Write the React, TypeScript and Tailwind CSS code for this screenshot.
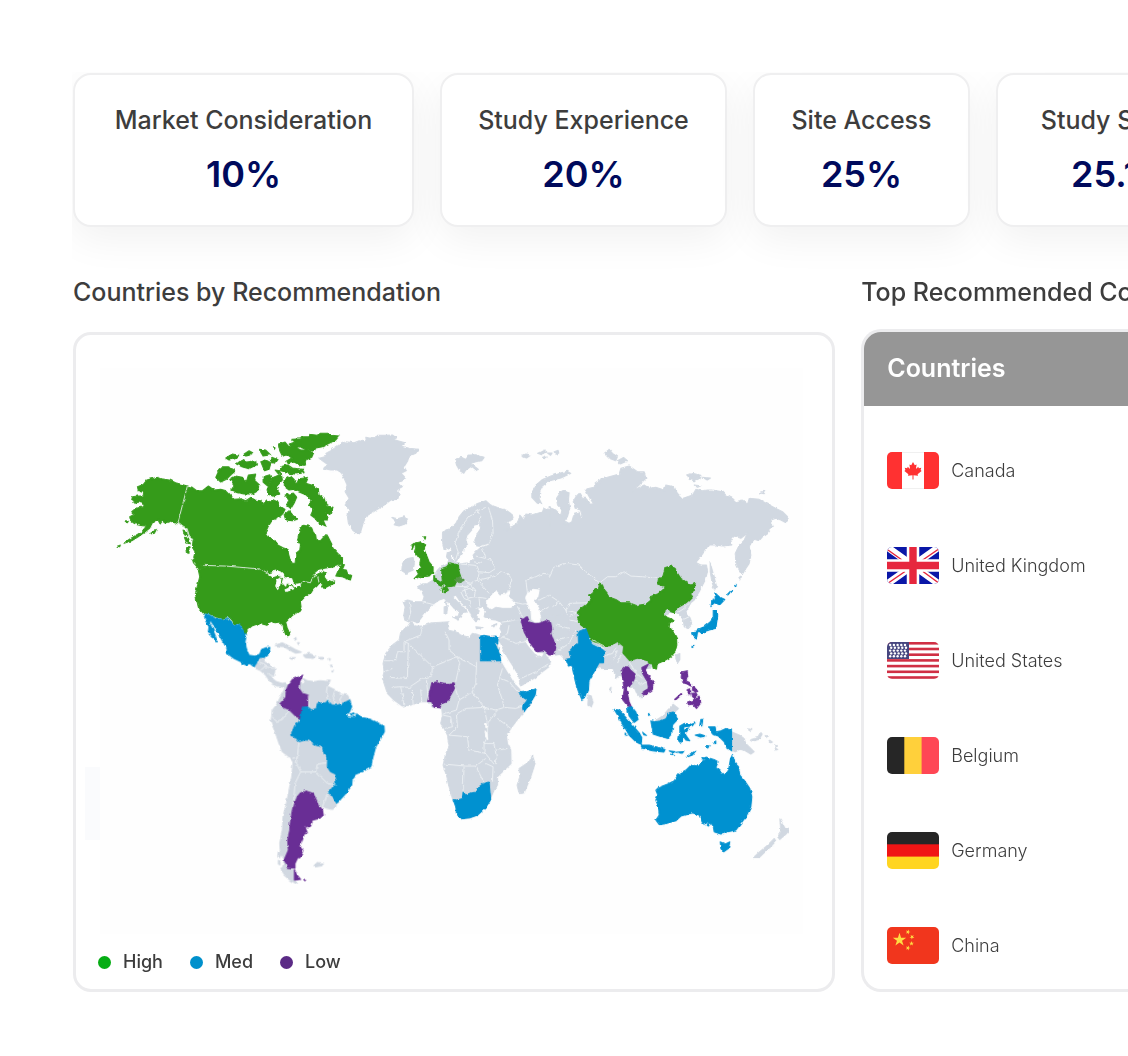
import { clsx } from 'clsx'

const weights = [
  { name: 'Market Consideration', value: '10%', width: 'w-[341px]' },
  { name: 'Study Experience', value: '20%', width: 'w-[287px]' },
  { name: 'Site Access', value: '25%', width: 'w-[217px]' },
  { name: 'Study Startup', value: '25.1%', width: 'w-[254px]' },
]

const legend = [
  { name: 'High', color: 'bg-[#06ad14]' },
  { name: 'Med', color: 'bg-[#0090cc]' },
  { name: 'Low', color: 'bg-[#5b2b86]' },
]

const LAND = '#d1d8e1'
const HIGH = '#359b1a'
const MED = '#0091d0'
const LOW = '#692e95'
const SEA = '#fefefe'

type Shape = [fill: string, d: string]

interface Region {
  name: string
  transform: string
  shapes: Shape[]
  borders?: string
}

const regions: Region[] = [
  {
    name: 'eurasia-west',
    transform: 'translate(310 420) scale(.33333)',
    shapes: [
      [LAND, 'M400 340 410 330 425 325 440 310 450 290 465 272 485 262 505 250 530 242 545 255 565 262 590 270 605 280 612 292 605 302 585 306 600 315 605 325 590 330 580 318 590 328 612 318 622 312 628 300 632 285 645 300 650 282 670 285 700 275 705 262 720 270 745 290 780 310 780 690 700 650 575 650 580 640 572 625 580 608 560 600 545 598 525 590 528 575 540 568 528 570 520 560 505 565 510 575 500 585 512 598 500 605 488 590 482 575 470 560 450 540 440 525 430 530 445 545 462 560 474 575 462 578 456 592 448 588 450 578 435 565 420 548 405 535 390 540 375 550 360 565 350 575 335 595 325 608 310 602 298 605 287 600 284 585 288 560 282 545 295 540 320 545 340 545 345 530 340 515 325 500 340 492 355 490 372 480 375 465 385 450 395 440 400 440 415 432 418 420 412 410 415 395 425 392 430 400 425 415 435 425 450 432 465 430 480 428 492 418 492 405 500 395 515 382 540 375 540 370 515 376 500 375 497 360 505 340 515 325 510 312 495 315 488 330 475 345 470 360 475 375 462 385 460 400 450 412 440 425 435 415 430 395 425 380 405 390 400 365Z'],
      [LAND, 'M248 292 265 296 285 290 295 300 288 312 270 318 255 314 262 304ZM438 118 458 112 470 118 480 105 500 104 525 112 518 122 500 125 485 130 508 148 500 152 485 140 470 150 464 160 452 152 442 135ZM638 108 650 102 664 106 652 114ZM685 100 705 90 713 96 698 104ZM700 112l12-4 2 4-10 4ZM715 99l14 0-5 7ZM735 95l12-4 2 8-8 4ZM668 232 668 215 680 195 700 178 725 168 750 160 775 154 785 160 755 174 722 182 702 196 692 215 690 235 698 252 685 250Z'],
      [LAND, 'M280 430 295 415 312 412 316 430 312 450 290 460 278 452ZM430 590 450 588 448 600ZM405 560 415 560 413 582 405 582ZM408 543 414 543 412 556ZM500 620 522 622 502 626ZM548 616 564 610 556 622Z'],
      [LAND, 'M30 115 55 108 50 100 65 92 90 75 110 65 135 68 150 62 172 66 170 52 200 56 205 46 225 46 250 45 262 54 250 58 288 68 275 78 300 85 328 88 320 100 300 108 296 122 285 140 292 152 276 160 286 170 284 180 268 188 280 200 262 210 270 222 266 238 245 240 225 255 205 268 185 280 170 290 162 310 155 335 150 342 132 332 118 310 115 290 120 270 108 255 120 235 108 215 114 195 105 175 98 160 85 150 65 150 40 145 58 135Z'],
      [HIGH, 'M315 370 335 365 350 375 345 388 352 405 360 425 372 440 372 455 360 468 335 470 315 476 328 462 322 450 337 445 332 430 335 415 322 408 316 395 320 382ZM344 350l6 0-2 8ZM306 376l8-6-4 18ZM398 445 412 440 422 428 448 435 450 455 455 470 440 485 437 498 415 500 400 490 398 465ZM374 466l6 4 0 8 22 12 0 12-14-8-14-12ZM393 508 412 500 418 510 405 518Z'],
      ['#569a48', 'M438 480 455 472 466 480 450 488Z'],
    ],
    borders:
      'M440 418 447 395 438 370 448 340 460 315 480 290 505 272 530 262M505 272 515 290 508 310M538 262 550 300 552 340 540 370M455 432 500 436 510 460 505 480 480 490 466 480M500 408 528 415M492 425 520 430M520 385 530 415 545 420 560 445 540 458 510 455M510 480 550 470 575 455 600 465 608 480 595 515M505 480 522 500 540 520M480 490 500 510 495 530 532 535M437 498 470 500 490 490M455 515 480 505 500 512M455 515 465 535 485 545 485 562M465 505 475 535 495 530M400 520 405 510M340 545 378 555M300 545 305 575 298 602M400 495 395 520M610 545 640 552 660 550M625 560 640 590M655 520 650 480 680 470 700 460 750 465M690 540 720 525 750 540M695 575 720 560 750 585M578 606 635 600M580 640 605 630 625 605M600 640 640 660M510 535 512 560 500 565',
  },
  {
    name: 'eurasia-east',
    transform: 'translate(550 430) scale(.33333)',
    shapes: [
      [LAND, 'M0 232 20 240 35 255 38 240 25 225 22 205 35 185 45 180 60 188 58 210 62 235 55 260 40 278 52 284 68 275 75 250 90 246 95 264 101 264 94 240 78 235 72 215 80 200 90 190 100 205 110 205 125 222 133 222 120 200 108 178 140 170 138 158 155 148 180 140 210 132 215 115 240 108 265 125 285 125 290 145 270 165 250 182 285 165 300 175 320 172 345 180 350 165 375 170 385 190 400 205 430 195 440 178 460 182 475 180 490 180 520 185 530 195 550 205 560 215 580 210 595 222 600 205 630 208 655 222 680 235 700 245 715 260 710 278 695 270 680 265 665 270 672 290 660 300 650 315 640 320 630 332 615 328 605 340 600 350 605 375 600 400 590 415 580 432 570 420 560 400 558 370 570 345 585 330 594 310 575 325 555 318 545 330 548 345 520 348 500 345 478 345 465 365 450 385 440 397 455 405 472 405 475 425 468 450 450 485 435 510 425 518 410 545 420 560 428 580 415 595 405 590 402 568 385 548 370 545 340 560 370 610 360 680 330 695 300 715 160 715 50 690 30 670 0 670Z'],
      [LAND, 'M483 398 492 430 502 468 496 480 488 455 483 425ZM165 70 180 58 190 70 205 80 200 92 180 85ZM205 92 223 82 235 92 213 102ZM415 135 430 130 455 136 455 144 435 152 420 148ZM460 142l24 2-10 6ZM435 165l20 2-10 5ZM630 188l18-5-3 8ZM380 675 392 670 392 688 386 698 380 690ZM568 444l6-6-2 12Z'],
      [MED, 'M497 488 510 500 527 508 512 524 495 518 485 530 488 512 498 505ZM492 538 502 540 506 555 502 580 500 595 480 600 465 605 455 602 440 608 445 598 465 590 480 578 492 565ZM430 608 445 605 442 627 435 622ZM450 604l14-3-6 9ZM428 652l10-10-2 8ZM532 492l8-8 2 4-6 7ZM544 484l6-4-2 7ZM556 467l5-4-2 6Z'],
      [HIGH, 'M83 548 95 535 115 520 125 510 118 495 130 490 138 475 147 475 152 458 160 465 165 478 175 490 178 500 200 508 215 518 240 518 262 526 290 522 305 510 302 500 325 492 340 480 348 470 325 462 328 445 340 442 345 425 348 412 365 408 378 415 385 430 395 445 410 455 425 465 438 460 435 480 425 490 430 500 415 515 405 522 390 530 375 548 365 545 358 535 342 548 345 555 355 562 375 570 362 578 360 590 372 605 382 625 383 645 378 665 365 680 345 692 320 703 300 700 285 690 275 685 262 690 245 698 232 695 228 678 218 670 218 652 205 640 195 640 185 648 165 648 150 640 135 635 122 628 115 610 110 595 95 585 85 565 92 555ZM310 705l14-2-2 14-10-2Z'],
    ],
    borders:
      'M152 458 175 440 200 440 225 425 245 438 280 440 325 445M0 440 15 410 50 400 90 405 110 425 130 440 150 458M0 495 30 515 50 540 60 520 115 518M30 515 10 530M50 540 83 548M60 560 80 550M0 560 20 575 55 560M20 575 35 600 10 640M60 600 45 630 25 650M50 540 60 570 90 575M385 548 405 535 420 520M403 568 420 560',
  },
  {
    name: 'north-america',
    transform: 'translate(110 420) scale(.33333)',
    shapes: [
      [HIGH, 'M85 200 103 193 113 180 126 176 148 172 158 176 185 181 200 188 235 198 207 306 198 312 186 303 170 308 160 300 152 310 146 298 130 308 122 324 105 338 85 352 68 362 45 370 60 358 80 346 98 335 112 318 100 317 85 314 74 309 64 300 62 290 75 283 68 275 77 267 90 262 103 262 100 250 88 246 78 250 68 240 70 230 85 228 102 228 104 218 88 212ZM24 379l10-4-2 5ZM122 342 142 328 136 340ZM48 302l10 2-6 6Z'],
      [HIGH, 'M235 198 250 202 263 212 280 212 298 198 315 210 335 208 352 212 362 222 375 238 395 236 410 242 425 232 438 240 455 242 462 254 472 240 485 246 490 238 505 245 512 258 528 268 522 280 512 290 502 296 490 300 478 318 468 340 475 350 492 358 506 375 522 383 537 388 538 400 542 415 550 430 558 430 560 410 560 400 572 390 574 375 565 362 568 345 572 330 580 316 598 318 608 324 612 335 620 345 622 360 634 362 645 350 652 342 658 352 668 372 672 385 686 400 700 412 700 428 690 436 672 441 650 444 628 448 614 460 604 474 622 464 640 455 652 458 645 470 652 480 668 484 680 482 676 490 658 498 645 505 637 500 642 492 630 490 622 500 612 508 606 518 596 522 588 530 580 538 574 545 576 560 572 572 560 580 550 586 540 596 530 606 534 622 542 640 538 650 530 644 524 628 522 615 512 606 498 608 490 604 476 608 474 616 460 612 445 612 428 618 414 630 410 645 402 635 396 620 388 612 378 618 366 600 358 592 340 598 322 594 300 584 285 582 278 574 268 562 264 545 259 520 263 505 267 490 272 470 268 450 283 446 278 436 262 428 254 412 258 395 250 382 252 360 240 345 234 325 222 318 207 306Z'],
      [HIGH, 'M700 430 688 450 680 468 700 470 714 476 724 480 728 466 716 462 712 450 700 448 706 434ZM250 417 265 424 283 445 271 448 253 428ZM222 330l10 4 4 14-10-4ZM226 352l12 2 6 18-12-4ZM230 380l10 0 0 20-8-2Z'],
      [HIGH, 'M540 72 558 66 548 58 575 56 580 50 600 50 602 43 625 46 630 40 660 40 668 46 690 48 680 60 660 70 640 80 620 84 616 92 590 88 570 80 555 84ZM508 72 528 66 538 78 560 82 575 90 600 90 614 98 608 112 590 120 585 136 570 134 555 126 535 132 530 124 548 114 535 104 520 108 512 92ZM515 140 535 134 550 144 582 148 585 158 556 162 528 158 514 150ZM320 172 330 150 342 140 358 140 380 152 368 162 352 178 335 186ZM362 178 380 168 400 172 412 185 418 165 440 162 436 180 452 195 450 210 430 222 405 222 385 218 365 210 375 198Z'],
      [HIGH, 'M350 114 370 102 390 106 378 116 360 120ZM382 132 398 120 412 126 440 122 442 135 420 146 398 140ZM405 102 420 92 431 98 413 108ZM450 88 470 90 484 104 462 108ZM455 125 470 120 486 128 480 148 466 152ZM488 112 504 118 496 130 486 124ZM462 170 482 164 488 178 476 198 462 186ZM490 80l8 0-2 8ZM492 172 517 162 520 180 502 200 512 222 496 230 476 222 474 208ZM498 150l16 2-6 10Z'],
      [HIGH, 'M525 180 545 168 555 178 562 192 570 176 598 172 590 190 610 196 628 208 630 225 650 240 655 258 672 262 662 284 650 276 655 300 642 300 650 318 628 308 618 295 605 285 614 265 598 258 606 240 590 224 570 216 555 208 540 210 526 200ZM528 225 553 219 563 231 555 250 545 266 530 252 540 242ZM525 284 540 272 552 286 565 298 550 302 530 300Z'],
      [SEA, 'M478 462 490 458 498 450 520 458 526 472 505 466 490 470ZM505 478 516 474 512 495 506 508 500 498ZM524 472 548 476 553 492 540 494 534 482 530 498 520 488ZM528 509 550 500 554 506 530 514ZM552 494 572 490 574 496 556 500Z'],
    ],
    borders:
      'M235 198 207 306 222 318 234 325 240 345 252 360M283 436 350 438 420 444 455 447 478 460M572 494 582 484 604 488 612 470 625 466 630 488M285 582 300 584 322 594 340 598 358 592 366 600 378 618 388 612 396 620 402 635 410 645',
  },
  {
    name: 'latin-america',
    transform: 'translate(190 610) scale(.33333)',
    shapes: [
      [LAND, 'M195 168 205 155 210 145 228 142 225 155 240 162 258 175 255 195 250 205 262 215 280 220 290 218 295 230 285 232 265 228 250 222 240 210 230 195 215 182 200 175ZM258 106 280 98 300 108 318 118 337 126 320 129 305 122 285 110 270 108ZM343 136 360 130 380 138 372 145 350 143ZM303 143l14 0-4 5ZM390 142l12 0 0 5-12 0ZM315 85l5-3 2 6ZM325 98l6 0-2 6ZM420 145l4 2-2 4ZM424 165l5 0-2 6ZM428 180l5 0-3 6ZM414 210l10 0-4 8Z'],
      [LAND, 'M290 230 305 215 325 200 340 198 332 215 345 225 342 205 355 212 375 215 395 212 418 215 415 228 435 238 455 252 475 255 485 272 480 400 455 560 443 580 440 590 430 598 412 594 400 588 385 600 370 560 325 600 300 660 296 690 298 730 290 750 275 735 272 700 280 660 282 620 292 580 300 540 308 500 312 455 300 440 280 425 270 400 258 365 246 335 250 300 262 285ZM285 750 292 770 305 775 315 780 316 808 325 822 305 812 285 795 275 775 282 770ZM268 725l6 4-2 14-6-6ZM268 750l5 2 0 12-5-2ZM375 767 385 757 403 759 398 767 378 770Z'],
      [MED, 'M45 12 60 14 78 25 100 28 118 24 128 38 138 48 150 42 162 60 172 75 168 95 172 115 180 135 198 138 212 132 218 118 230 113 243 112 238 130 225 142 212 142 205 155 195 170 182 160 170 165 155 155 135 145 112 128 115 118 105 100 92 78 82 62 72 42 62 28 62 40 72 60 78 75 86 95 80 95 70 80 58 64 60 50 50 32Z'],
      [LOW, 'M272 282 290 262 292 240 298 225 310 208 328 202 342 195 332 215 330 235 340 250 358 255 355 290 340 292 336 326 320 318 300 298 285 293Z'],
      [MED, 'M305 375 318 345 330 335 335 320 340 292 355 290 368 300 382 295 385 280 410 278 418 270 425 285 445 285 465 278 482 270 488 290 478 312 500 310 520 322 545 328 570 340 585 348 586 365 575 385 560 410 552 440 545 470 520 485 500 492 490 505 488 525 470 550 445 578 430 560 418 545 430 530 443 515 440 492 425 485 415 470 416 440 405 430 400 410 380 405 360 390 345 390 330 395 320 382Z'],
      [SEA, 'M474 316 488 304 500 308 498 318 486 318Z'],
      [MED, 'M484 312l10-4 2 6-8 2Z'],
      [LOW, 'M325 560 335 548 350 542 372 550 382 570 390 588 400 598 403 615 392 625 370 630 365 648 348 650 355 668 345 672 340 690 330 708 342 720 335 738 325 745 318 760 318 774 295 772 286 748 298 720 296 690 302 660 305 625 312 590ZM316 778 322 792 335 808 316 810ZM344 808l6 0-2 4Z'],
    ],
    borders:
      'M205 155 222 160 228 170 215 180M228 170 258 176M235 190 255 200M250 320 262 334 280 328 300 300M310 445 325 440 330 395M325 440 322 460 335 485 318 520 312 590M335 485 380 485 385 462 412 458M380 485 395 500 415 520 440 525M418 545 400 590M415 228 412 245 422 280M438 240 432 260 440 284M462 254 452 268 458 282M358 255 360 290',
  },
  {
    name: 'africa-middle-east',
    transform: 'translate(370 600) scale(.33333)',
    shapes: [
      [LAND, 'M395 75 480 50 600 45 600 170 578 162 560 165 530 160 505 155 488 138 475 120 462 116 476 138 490 155 505 172 520 170 526 158 532 168 545 180 540 200 520 215 495 235 475 245 455 258 448 245 445 225 430 200 415 180 400 150 388 128 392 110 400 90Z'],
      [LAND, 'M125 65 140 78 160 78 190 68 240 65 238 80 235 90 260 95 275 105 300 112 310 100 333 106 380 108 388 118 390 135 395 160 400 185 412 205 425 230 440 255 452 268 455 278 475 275 500 266 498 280 485 310 462 338 440 365 425 385 412 405 415 430 425 450 426 490 405 510 385 530 385 555 375 570 362 600 345 625 325 645 300 655 275 656 262 640 260 610 250 595 240 560 230 520 222 495 230 460 240 440 235 405 225 385 215 370 220 345 218 325 205 322 190 318 178 305 155 305 125 315 100 318 75 300 55 280 45 250 40 235 45 215 42 190 50 160 70 135 90 120 95 95 115 80ZM444 555 452 530 450 505 480 485 490 466 498 490 485 530 465 578 450 580Z'],
      [SEA, 'M385 122 392 130 402 155 418 182 432 204 446 228 449 248 440 252 425 228 410 204 398 184 394 160ZM350 368l6 2 0 14-6-2ZM348 392l6 8 2 18-6-8Z'],
      [MED, 'M334 108 345 106 365 110 380 108 387 112 386 132 372 120 382 140 392 165 395 182 334 182ZM448 278 470 276 501 266 498 285 482 310 464 336 460 318 475 300 462 292ZM252 598 262 600 280 595 282 575 290 585 305 578 322 576 330 560 345 548 360 546 363 580 365 598 350 622 325 645 305 652 275 656 262 640 260 620Z'],
      [LOW, 'M180 280 185 262 188 248 205 245 225 250 240 250 255 248 258 262 245 285 232 305 215 312 212 323 195 322 188 305 176 303ZM454 55 462 58 472 50 478 65 495 70 515 68 530 62 545 68 548 85 545 100 552 120 560 142 555 164 540 165 525 152 505 155 490 138 478 120 465 95 460 75Z'],
    ],
    borders:
      'M160 78 155 105 105 125 118 130M45 182 80 182 85 155 105 155 105 125M118 130 190 200 265 170 240 150 240 120 228 95M265 170 322 200 322 182M265 172 272 190 260 245M118 130 115 235 60 232M190 200 188 228 160 235 120 262M322 200 320 250 310 275 345 322M258 262 270 300 310 275M270 300 262 330 222 342M345 322 380 330 405 322M400 205 385 255 400 300 405 322 440 325 460 318M395 235 420 245 450 280M262 342 290 325 345 322 355 370 355 410 345 430M238 405 295 410 300 450 350 460M225 492 290 498 320 498 350 475M285 500 282 575M320 498 345 548M345 430 375 430 382 470 378 492M350 490 372 500 370 545M415 445 385 450M355 370 385 330M385 355 425 385M68 262 95 260 100 285 105 318M130 270 132 312M155 268 158 305M172 240 178 300M220 345 245 350 250 380 228 385M262 342 265 380 240 405M45 215 70 205M95 260 120 262M455 235 500 215 540 190M400 110 440 130 470 125M420 75 415 100 395 115M560 120 600 110M560 75 600 85M345 430 345 455 375 492',
  },
  {
    name: 'south-asia-oceania',
    transform: 'translate(560 630) scale(.33333)',
    shapes: [
      [LAND, 'M135 55 155 50 175 38 190 50 188 70 210 95 235 88 265 95 258 120 262 140 270 160 268 180 250 185 248 205 235 195 225 172 205 165 185 135 172 145 162 120 155 95 140 100 135 85ZM88 195 96 197 102 217 96 231 86 225ZM152 175l4-4-2 18ZM288 272 310 258 330 235 342 222 358 235 345 247 330 252 318 267 300 278ZM517 305 540 315 555 325 560 340 585 365 575 372 555 360 540 358 530 365 517 362ZM575 328 595 322 603 308 609 312 600 328 580 333ZM568 296l10 2-8 4ZM618 316l8 2-6 4ZM632 330l8 6-6 2ZM646 344l6 4-4 4ZM648 354l8 4-6 2Z'],
      [LAND, 'M662 566 670 580 678 595 692 598 680 612 662 628 655 620 665 605ZM645 625 650 632 635 650 615 668 600 682 583 682 598 668 625 645Z'],
      [MED, 'M57 5 80-5 90 22 98 40 118 50 135 62 133 98 120 98 105 125 90 150 88 180 80 200 68 208 58 185 50 160 42 125 38 105 28 108 20 88 35 85 30 65 42 50 58 40Z'],
      [LOW, 'M186 122 205 105 212 118 228 132 225 148 215 165 200 170 205 190 210 215 218 232 205 227 190 208 195 180 192 155 190 138ZM248 112 268 102 258 120 270 140 282 155 280 178 262 193 252 195 252 185 268 175 265 155 250 130ZM368 125 384 122 386 140 380 152 398 160 395 168 372 155 366 142ZM384 178l8-2 4 8-4 10-8-6ZM400 170l8 4 8 10-6 2-10-6ZM398 190l12-2 4 6-8 10-6-4ZM385 216 405 208 420 198 425 218 412 235 400 222 388 224ZM346 208 366 190 368 193 350 209Z'],
      [MED, 'M205 232 218 230 230 245 237 268 225 277 210 258ZM165 238 180 240 200 262 220 285 240 308 248 322 246 343 230 335 210 315 190 280ZM245 345 270 345 300 352 318 358 314 366 280 362 250 355ZM275 272 285 275 305 272 320 266 330 248 345 245 355 268 340 285 338 310 325 325 300 318 282 312 278 290ZM362 288 375 280 392 282 408 275 400 287 375 290 372 302 390 292 378 312 392 332 380 330 372 318 366 340 358 332 362 305ZM425 268l6 0-3 20-6-4ZM408 315 422 312 440 318 424 321ZM448 290 468 290 470 305 485 302 500 295 517 300 517 362 500 350 495 335 478 318 460 312ZM380 382 395 370 410 362 400 375ZM330 362l18 2-6 4ZM352 366l22-2-6 6ZM334 372l12 4-8 0ZM442 350l8-4-4 8ZM464 340l6-8 0 8ZM178 262l6 6-4 2ZM188 286l8 8-4 2ZM198 308l6 8-6-2ZM250 306l12 10-8-2ZM268 250l4 4-4 2Z'],
      [MED, 'M290 480 298 472 325 462 345 452 358 432 380 420 395 405 420 408 425 395 440 388 438 380 465 388 477 395 470 412 498 435 508 420 514 385 520 373 528 400 538 410 542 435 555 450 572 475 578 500 575 530 560 560 545 580 530 600 505 605 485 612 465 605 462 588 450 572 436 584 430 578 420 555 400 548 365 558 350 572 320 580 300 583 290 570 300 555 298 530 290 510 296 495ZM483 635 498 642 512 635 508 655 492 666 485 655ZM428 382l12 2-8 4ZM444 586l8-12 2 4-6 10Z'],
    ],
    borders: 'M98 40 118 50 135 55M135 78 160 70 172 50M160 90 175 62M188 70 175 100M210 95 232 130 250 145M228 150 245 165 262 155M0 60 30 40 50 0M90 25 140 50',
  },
  {
    name: 'inland-seas',
    transform: 'translate(310 420) scale(.33333)',
    shapes: [
      [SEA, 'M535 542 548 525 560 512 572 525 590 522 602 512 594 530 610 540 618 554 605 562 580 562 560 558 548 566 535 560ZM655 520 670 508 690 510 686 530 674 538 684 556 690 568 694 590 690 606 678 606 668 598 666 575 658 555 650 535Z'],
    ],
  },
]

function WorldMap() {
  return (
    <svg viewBox="77 335 756 600" className="block w-full" role="img" aria-label="Countries by recommendation">
      <defs>
        {/* roughens the coast lines */}
        <filter id="coast" x="0" y="0" width="1" height="1" colorInterpolationFilters="sRGB">
          <feTurbulence type="fractalNoise" baseFrequency="0.22" numOctaves="2" seed="4" />
          <feDisplacementMap in="SourceGraphic" scale="3" xChannelSelector="R" yChannelSelector="G" />
        </filter>
      </defs>
      <rect x="86" y="767" width="15" height="73" fill="#fafbfd" />
      <rect x="101" y="368" width="703" height="566" fill={SEA} />
      <g filter="url(#coast)">
        {regions.map((region) => (
          <g key={region.name} transform={region.transform}>
            {region.shapes.map(([fill, d]) => (
              <path key={d} d={d} fill={fill} stroke={fill} strokeWidth="3" strokeLinejoin="round" />
            ))}
            {region.borders && (
              <path d={region.borders} fill="none" stroke="#f1f4f7" strokeWidth="2.6" strokeLinejoin="round" />
            )}
          </g>
        ))}
      </g>
    </svg>
  )
}

function CanadaFlag() {
  return (
    <>
      <rect width="52" height="37" fill="#fff" />
      <rect width="15" height="37" fill="#ff3131" />
      <rect x="37" width="15" height="37" fill="#ff3131" />
      <path d="M15 .5h22M15 36.5h22" stroke="#f0f0f0" />
      <path
        fill="#ff3131"
        d="M26 10l1.8 3.2 1.8-.8-.7 4.6 2.4-2.2.5 1.4 2.5-.4-.7 2.3 1 .9-4 3.2.5 1.5-4.6-.5V27.500h-1v-4.300l-4.600.500.500-1.500-4-3.200 1-.9-.7-2.300 2.500.4.500-1.400 2.400 2.200-.7-4.600 1.800.8z"
      />
    </>
  )
}

function UkFlag() {
  return (
    <>
      <rect width="52" height="37" fill="#0a17a7" />
      <path d="M0 0l52 37M52 0L0 37" stroke="#fff" strokeWidth="7" />
      <path d="M1 3l14 10M51 2.500l-16 11M2 35.500l16-11M51 35.500l-15-11" stroke="#e6273e" strokeWidth="1.500" />
      <path d="M26 0v37M0 18.500h52" stroke="#fff" strokeWidth="12.500" />
      <path d="M26 0v37M0 18.500h52" stroke="#e6273e" strokeWidth="7.400" />
    </>
  )
}

function UsFlag() {
  const rows = [0, 1, 2, 3, 4]
  return (
    <>
      <rect width="52" height="37" fill="#fff" />
      {[0, 1, 2, 3, 4, 5, 6].map((i) => (
        <rect key={i} y={i * 5.7} width="52" height="2.6" fill="#d02f44" />
      ))}
      <rect width="22" height="17" fill="#46467f" />
      {rows.map((r) =>
        rows.map((c) => (
          <circle key={`${r}-${c}`} cx={3.2 + c * 3.7 + (r % 2)} cy={3 + r * 2.8} r="1.2" fill="#fff" />
        ))
      )}
    </>
  )
}

function BelgiumFlag() {
  return (
    <>
      <rect width="18" height="37" fill="#262626" />
      <rect x="17.300" width="18" height="37" fill="#ffd03b" />
      <rect x="34.600" width="18" height="37" fill="#ff4755" />
    </>
  )
}

function GermanyFlag() {
  return (
    <>
      <rect width="52" height="13" fill="#262626" />
      <rect y="12.300" width="52" height="13" fill="#f01515" />
      <rect y="24.600" width="52" height="13" fill="#ffd521" />
    </>
  )
}

const STAR = 'M0-1L.2245-.309.951-.309.363.118.588.809 0 .382-.588.809-.363.118-.951-.309-.2245-.309Z'

function ChinaFlag() {
  return (
    <>
      <rect width="52" height="37" fill="#f1361d" />
      <g fill="#ffdc42">
        <path d={STAR} transform="translate(12.500 12.800) scale(7)" />
        <path d={STAR} transform="translate(21 5) rotate(20) scale(2.600)" />
        <path d={STAR} transform="translate(25 10) rotate(40) scale(2.600)" />
        <path d={STAR} transform="translate(24.500 16.500) scale(2.600)" />
        <path d={STAR} transform="translate(21 21) rotate(20) scale(2.600)" />
      </g>
    </>
  )
}

const countries = [
  { name: 'Canada', flag: CanadaFlag },
  { name: 'United Kingdom', flag: UkFlag },
  { name: 'United States', flag: UsFlag },
  { name: 'Belgium', flag: BelgiumFlag },
  { name: 'Germany', flag: GermanyFlag },
  { name: 'China', flag: ChinaFlag },
]

export default function App() {
  return (
    <main className="min-h-screen overflow-hidden bg-white pt-[72px] pb-16 pl-[72px] font-['Inter',sans-serif] text-[#3d3d3d]">
      {/* Weights */}
      <section className="flex gap-[26px] overflow-hidden pt-px pb-[49px] pl-px">
        {weights.map((item) => (
          <div
            key={item.name}
            className={clsx(
              'flex h-[154px] shrink-0 flex-col items-center rounded-[18px] border-2 border-[#efeff0] bg-white pt-[29px] whitespace-nowrap shadow-[0_12px_40px_rgba(0,0,0,0.06)]',
              item.width
            )}
          >
            <h3 className="text-[25px] leading-8 font-medium">{item.name}</h3>
            <p className="mt-3 text-[36px] leading-[52px] font-semibold text-[#000a5c]">{item.value}</p>
          </div>
        ))}
      </section>

      <div className="grid grid-cols-[20fr_7fr] gap-[26px] pl-px">
        {/* Map */}
        <section className="min-w-0">
          <h2 className="text-[25px] leading-8 font-medium whitespace-nowrap">Countries by Recommendation</h2>
          <div className="mt-6 rounded-[18px] border-3 border-[#ececee] bg-white">
            <WorldMap />
            <ul className="flex gap-[27px] pt-[15px] pb-[15px] pl-[22px]">
              {legend.map((item) => (
                <li key={item.name} className="flex items-center gap-3 text-[18px] leading-6 font-medium">
                  <span className={clsx('size-[13px] rounded-full', item.color)} />
                  {item.name}
                </li>
              ))}
            </ul>
          </div>
        </section>

        {/* Top countries */}
        <section className="min-w-0">
          <h2 className="text-[25px] leading-8 font-medium whitespace-nowrap">Top Recommended Countries</h2>
          <div className="mt-[21px] overflow-hidden rounded-l-[20px] border-3 border-r-0 border-[#ececee] bg-white">
            <table className="w-full text-left">
              <thead>
                <tr>
                  <th className="h-[74px] bg-[#969696] pl-[23px] text-[25px] font-semibold text-white">Countries</th>
                </tr>
              </thead>
              <tbody>
                {countries.map((country, i) => (
                  <tr key={country.name}>
                    <td
                      className={clsx(
                        'pl-[23px]',
                        i === 0 && 'pt-[46px]',
                        i === countries.length - 1 ? 'pb-[25px]' : 'pb-[58px]'
                      )}
                    >
                      <div className="flex items-center gap-3">
                        <svg viewBox="0 0 52 37" className="h-[37px] w-[52px] shrink-0 rounded-[5px]" aria-hidden="true">
                          <country.flag />
                        </svg>
                        <span className="text-[18px] leading-6 font-light whitespace-nowrap">{country.name}</span>
                      </div>
                    </td>
                  </tr>
                ))}
              </tbody>
            </table>
          </div>
        </section>
      </div>
    </main>
  )
}
